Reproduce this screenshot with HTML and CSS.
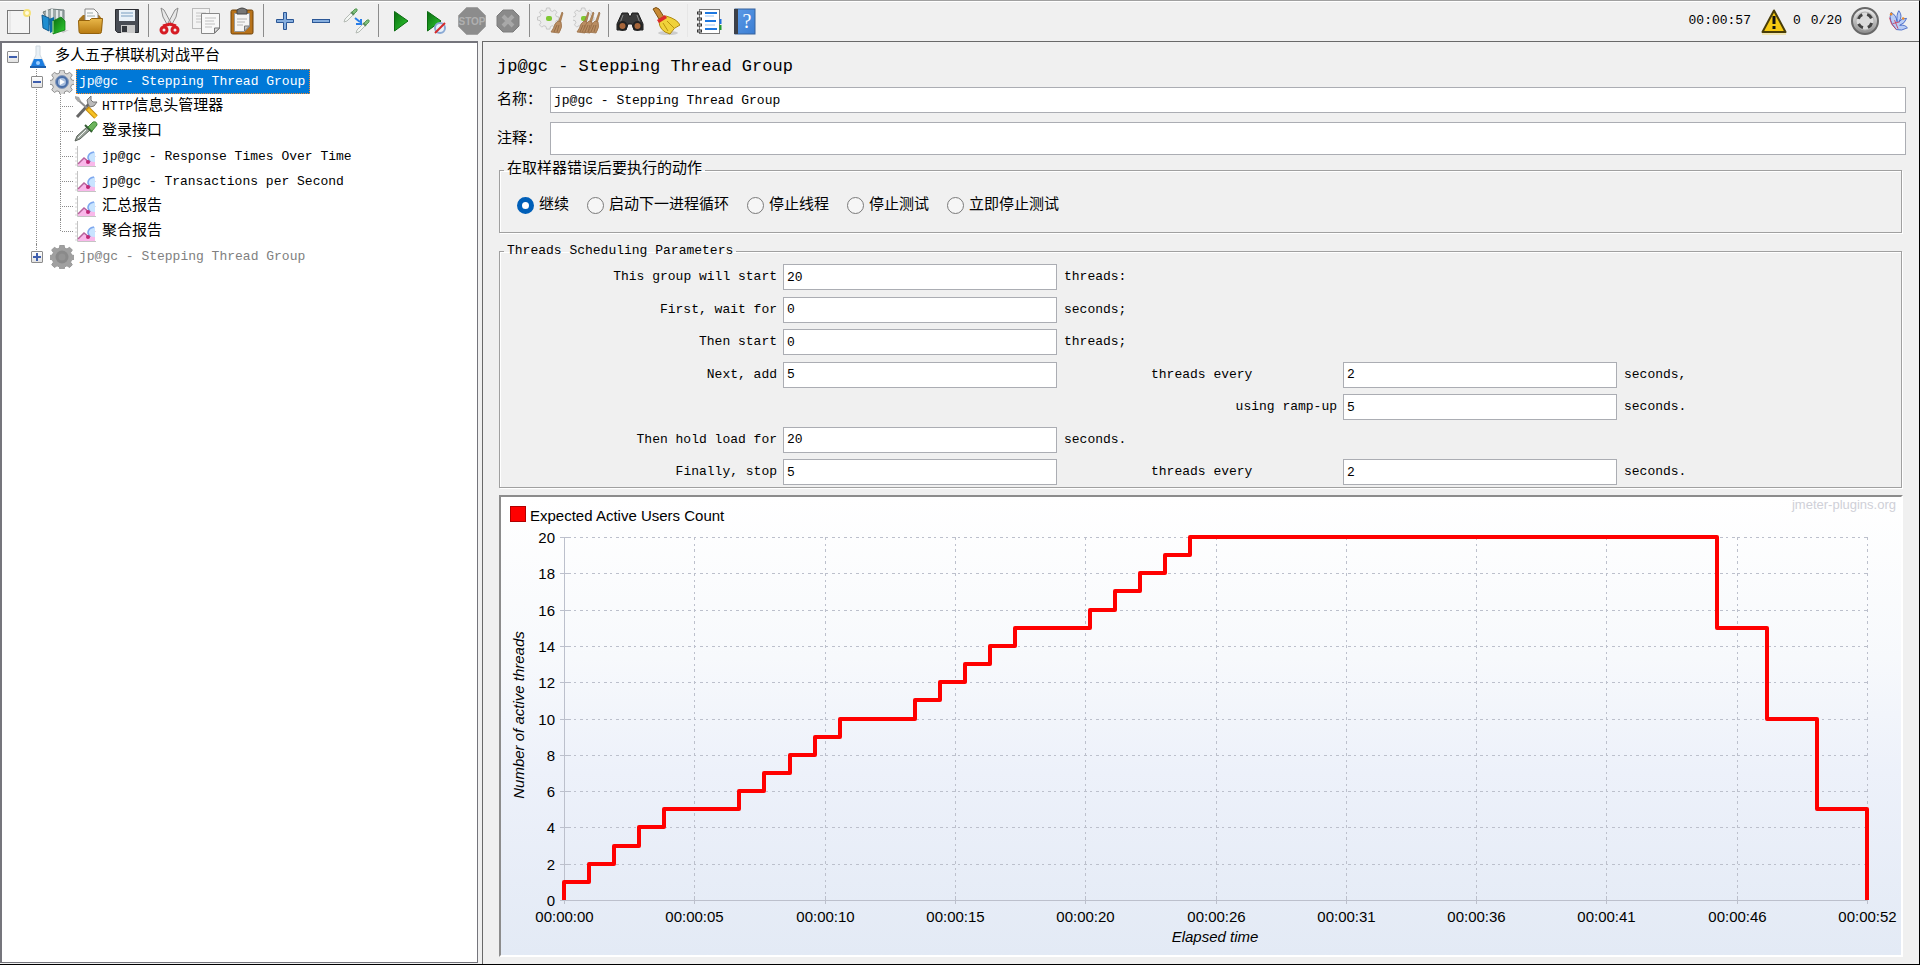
FILE: index.html
```html
<!DOCTYPE html>
<html lang="zh-CN">
<head>
    <meta charset="UTF-8">
    <meta name="viewport" content="width=device-width, initial-scale=1.0">
    <title>多人五子棋联机对战平台</title>
    <link rel="stylesheet" href="styles.css">
</head>
<body>
    <!-- shared icon symbols and gradients -->
    <svg class="defs" width="0" height="0" aria-hidden="true">
        <defs>
            <linearGradient id="green" x1="0" y1="0" x2="1" y2="1">
                <stop offset="0" stop-color="#0b6b12"/>
                <stop offset="1" stop-color="#2fd02f"/>
            </linearGradient>
            <linearGradient id="gold" x1="0" y1="0" x2="0" y2="1">
                <stop offset="0" stop-color="#e9b84a"/>
                <stop offset="1" stop-color="#b87a10"/>
            </linearGradient>
            <linearGradient id="steel" x1="0" y1="0" x2="0" y2="1">
                <stop offset="0" stop-color="#f2f2f2"/>
                <stop offset="1" stop-color="#8a8a8a"/>
            </linearGradient>
            <linearGradient id="blue" x1="0" y1="0" x2="1" y2="1">
                <stop offset="0" stop-color="#5c9be8"/>
                <stop offset="1" stop-color="#3b7dd2"/>
            </linearGradient>
            <g id="pipette">
                <path d="M0 13 L1 10 L7 4 L9 6 L3 12 Z" fill="#f4f7f4" stroke="#b4bab4" stroke-width="1"/>
                <path d="M7 3 L10 6" stroke="#5a8a5a" stroke-width="1.500"/>
                <path d="M8 3 L11 0 Q14 -1 13 2 L10 5 Z" fill="#7fbd7a" stroke="#5a9a58" stroke-width="1"/>
            </g>
            <g id="broom">
                <path d="M11 0 L12 1 L9 12 L7 11 Z" fill="#b98a58" stroke="#8d6238" stroke-width=".6"/>
                <path d="M7 9 L10 10 Q12 15 8 21 L0 20 Q3 16 4 12 Z" fill="#b98d62" stroke="#9a7048" stroke-width=".8"/>
                <path d="M3 20 L6 13 M6 20 L8 13" stroke="#8d6540" stroke-width=".8"/>
            </g>
            <g id="cog">
                <path d="M10 0h4l.6 3 2.4 1 2.6-1.7 2.7 2.7-1.7 2.6 1 2.4 3 .6v3.6l-3 .6-1 2.4 1.7 2.6-2.7 2.7-2.6-1.7-2.4 1-.6 3h-4l-.6-3-2.4-1-2.6 1.7-2.7-2.7 1.7-2.6-1-2.4-3-.6v-3.6l3-.6 1-2.4-1.7-2.6 2.7-2.7 2.6 1.7 2.4-1z"/>
            </g>
            <symbol id="chart-icon" viewBox="0 0 24 24">
                <path d="M3.500 1V21.500H22" fill="none" stroke="#c4c4c4"/>
                <path d="M1 4h2M1 8h2M1 12h2M1 16h2M1 20h2" stroke="#d4d4d4"/>
                <path d="M4 20 L10 13 L15 17 L21 9 V21 H4 Z" fill="#f9b8ea"/>
                <path d="M4 19 L10 13 L15 17 L21 11" fill="none" stroke="#b8609c" stroke-width="1.500"/>
                <path d="M21 7 Q15 7 13 12 Q15 17 21 17 Z" fill="#c8e4ff"/>
                <path d="M20 7 Q14 8 14 13 L16 17" fill="none" stroke="#7fa8ee" stroke-width="1.500"/>
                <circle cx="14" cy="17" r="2" fill="#c02878"/>
            </symbol>
        </defs>
    </svg>

    <header class="toolbar">
        <div class="tools">
            <button type="button" title="新建">
                <svg viewBox="0 0 28 28"><rect x="2.500" y="3.500" width="22" height="23" fill="#f4f4f4" stroke="#777"/><path d="M5 4V26" stroke="#dcdcdc"/><circle cx="22" cy="6" r="3" fill="#fffbe0" stroke="#f5e27a" stroke-width="2"/></svg>
            </button>
            <button type="button" title="模板">
                <svg viewBox="0 0 28 28"><path d="M20 24l8-1-6 3z" fill="#c4c4c4"/><path d="M2 5l8-3 13 1v12l-14 3z" fill="#9fabab" stroke="#6f7c7c"/><path d="M6 3v10M11 2v10M16 3v10M20 4v9" stroke="#e2e8e8" stroke-width="2"/><path d="M1 8l7 3v13l-6-3z" fill="#1f8ed0" stroke="#11598c"/><path d="M8 12l5-2v14l-4 2z" fill="#0e6da8"/><path d="M12 14l8-4 4 4v9l-12 4z" fill="url(#green)" stroke="#0c7d12" stroke-width=".8"/><path d="M12 14v12" stroke="#bff0b0"/></svg>
            </button>
            <button type="button" title="打开">
                <svg viewBox="0 0 28 28"><path d="M2 12l4-4h16l3 4v12H3z" fill="#a8741c"/><path d="M8 2h9l4 4v12H8z" fill="#fafafa" stroke="#888"/><path d="M10 6h6M10 9h8" stroke="#9aa"/><path d="M1.500 13.500h11l2-2h11l-1 13q0 2-2 2H4q-2 0-2-2z" fill="url(#gold)" stroke="#93610d"/></svg>
            </button>
            <button type="button" title="保存">
                <svg viewBox="0 0 28 28"><path d="M2.500 2.500h23v23h-21l-2-2z" fill="#484c54" stroke="#2a2c31"/><rect x="6" y="3" width="16" height="11" fill="#eaf1f8"/><path d="M8 6h12M8 9h12" stroke="#9fb9d2" stroke-width="1.500"/><rect x="8" y="18" width="14" height="8" fill="#c9c9c9"/><rect x="9" y="19" width="5" height="6" fill="#33363c"/></svg>
            </button>
        </div>
        <div class="tools">
            <button type="button" title="剪切">
                <svg viewBox="0 0 28 28"><path d="M5 1l3 2 7 13-3 3-5-9zM22 1l-3 2-7 13 3 3 5-9z" fill="#e8e8e8" stroke="#8c8c8c"/><circle cx="8" cy="23" r="3" fill="none" stroke="#d61c24" stroke-width="3"/><circle cx="19" cy="23" r="3" fill="none" stroke="#d61c24" stroke-width="3"/><path d="M7 19l7-2 6 2" stroke="#d61c24" stroke-width="3" fill="none"/></svg>
            </button>
            <button type="button" title="复制">
                <svg viewBox="0 0 28 28"><rect x=".5" y="1.500" width="17" height="20" fill="#f3f3f3" stroke="#bbb"/><path d="M4 6h10M4 9h5M4 12h5M4 15h5" stroke="#c4c4c4"/><path d="M9.500 6.500h18v15l-5 5h-13z" fill="#f8f8f8" stroke="#888"/><path d="M22.500 26v-5h5z" fill="#ddd" stroke="#777"/><path d="M13 11h11M13 14h9M13 17h10M13 20h7" stroke="#c0c0c0"/></svg>
            </button>
            <button type="button" title="粘贴">
                <svg viewBox="0 0 28 28"><rect x="3" y="3" width="22" height="24" rx="1.500" fill="#b8731b" stroke="#6f430b"/><path d="M6.500 6.500h15v13l-5 5h-10z" fill="#f5f5f5" stroke="#999"/><path d="M16.500 24v-5h5z" fill="#c9c9c9" stroke="#777"/><path d="M9 12h10M9 15h8M9 18h6" stroke="#b4b4b4"/><path d="M9 3q5-4 10 0v4H9z" fill="#777" stroke="#444"/></svg>
            </button>
        </div>
        <div class="tools">
            <button type="button" title="全部展开">
                <svg viewBox="0 0 28 28"><path d="M12.500 5.500h3v7h7v3h-7v7h-3v-7h-7v-3h7z" fill="#86aede" stroke="#2b5796"/></svg>
            </button>
            <button type="button" title="全部折叠">
                <svg viewBox="0 0 28 28"><rect x="5.500" y="12.500" width="17" height="3" fill="#86aede" stroke="#2b5796"/></svg>
            </button>
            <button type="button" title="切换">
                <svg viewBox="0 0 28 28"><use href="#pipette" x="1" y="2"/><use href="#pipette" x="13" y="13"/><path d="M12 11l5 4M13 17h5v-5" fill="none" stroke="#2a7ee8" stroke-width="2"/></svg>
            </button>
        </div>
        <div class="tools">
            <button type="button" title="启动">
                <svg viewBox="0 0 28 28"><path d="M8.500 4.500L22 14 8.500 24z" fill="url(#green)" stroke="#0a6b10"/></svg>
            </button>
            <button type="button" title="不停顿开始">
                <svg viewBox="0 0 28 28"><path d="M5.500 4.500L19 14 5.500 24z" fill="url(#green)" stroke="#0a6b10"/><circle cx="18" cy="21" r="5" fill="#e6f0fa" stroke="#8aa9d4" stroke-width="2"/><path d="M13 26L23 16" stroke="#d42a2a" stroke-width="2"/></svg>
            </button>
            <button type="button" title="停止" disabled>
                <svg viewBox="0 0 28 28"><path d="M8.500 0.500h11l8 8v11l-8 8h-11l-8-8v-11z" fill="#8c8c8c" stroke="#a4a4a4"/><text x="14" y="18" class="stop-text">STOP</text></svg>
            </button>
            <button type="button" title="关闭" disabled>
                <svg viewBox="0 0 28 28"><path d="M9 3h10l6 6v10l-6 6H9l-6-6V9z" fill="#8a8a8a" stroke="#7c7c7c"/><path d="M9 9l10 10M19 9L9 19" stroke="#a8a8a8" stroke-width="4"/></svg>
            </button>
        </div>
        <div class="tools">
            <button type="button" title="清除">
                <svg viewBox="0 0 28 28"><g transform="translate(1 1) scale(.85)" fill="#ececec" stroke="#c0c0c0"><use href="#cog"/></g><rect x="9" y="9" width="6" height="5" rx="2" fill="#7fc832"/><use href="#broom" x="14" y="5"/></svg>
            </button>
            <button type="button" title="清除全部">
                <svg viewBox="0 0 28 28"><g transform="translate(0 1) scale(.85)" fill="#ececec" stroke="#c0c0c0"><use href="#cog"/></g><rect x="8" y="9" width="6" height="5" rx="2" fill="#7fc832"/><use href="#broom" x="4" y="5"/><use href="#broom" x="9" y="5"/><use href="#broom" x="15" y="5"/></svg>
            </button>
        </div>
        <div class="tools">
            <button type="button" title="查找">
                <svg viewBox="0 0 28 28"><path d="M6 6h6l1 3h2l1-3h6l5 11v6h-9l-2-6h-4l-2 6H1v-6z" fill="#3b3b3b" stroke="#1c1c1c"/><path d="M7 8l-3 8M21 8l3 8" stroke="#8d8d8d"/><circle cx="6.500" cy="19" r="4" fill="#a8663a" stroke="#222" stroke-width="2"/><circle cx="21.500" cy="19" r="4" fill="#a8663a" stroke="#222" stroke-width="2"/></svg>
            </button>
            <button type="button" title="重置查找">
                <svg viewBox="0 0 28 28"><ellipse cx="16" cy="26" rx="10" ry="2" fill="#ccc"/><path d="M1 2q3-3 6 0l5 8-5 2z" fill="#c88a34" stroke="#7b4f12"/><path d="M7 14l7-5q11 3 14 9-6 2-10 9Q7 24 7 14z" fill="#f0d23a" stroke="#b08a10"/><path d="M11 16l5 8M15 14l7 7" stroke="#b9930f"/><path d="M5 13l8-5 2 3-8 5z" fill="#dc2a2a"/></svg>
            </button>
        </div>
        <div class="tools last">
            <button type="button" title="函数助手对话框">
                <svg viewBox="0 0 28 28"><rect x="4.500" y="2.500" width="20" height="24" fill="#fff" stroke="#777"/><path d="M10 6h12M10 14h11M10 22h12" stroke="#1d78e0" stroke-width="2"/><path d="M10 9h9M10 18h10" stroke="#9cc4f2"/><path d="M2 6h5M2 12h5M2 18h5M2 24h5" stroke="#333" stroke-width="3"/><path d="M3 6h3M3 12h3M3 18h3M3 24h3" stroke="#ddd"/><path d="M25.500 12v5" stroke="#1d6fe0" stroke-width="2"/><path d="M25.500 18v5" stroke="#1f9a2c" stroke-width="2"/></svg>
            </button>
            <button type="button" title="帮助">
                <svg viewBox="0 0 28 28"><rect x="4" y="2" width="20" height="25" fill="url(#blue)" stroke="#37629c"/><rect x="3" y="2" width="4" height="25" fill="#3c4048"/><text x="16" y="21" class="help-text">?</text></svg>
            </button>
        </div>
        <div class="status">
            <span class="clock">00:00:57</span>
            <svg class="icon" viewBox="0 0 28 28"><path d="M2 26h24v2H2z" fill="#f0e4b0"/><path d="M14 3.500L25.500 25h-23z" fill="#f5c912" stroke="#4a3e08" stroke-width="2" stroke-linejoin="round"/><path d="M14 9v8M14 19v3" stroke="#111" stroke-width="3"/></svg>
            <span>0</span>
            <span class="count">0/20</span>
            <svg class="icon" viewBox="0 0 28 28"><circle cx="14" cy="14" r="13" fill="url(#steel)" stroke="#686868" stroke-width="2"/><circle cx="14" cy="14" r="9" fill="#dcdcdc" stroke="#b4b4b4"/><circle cx="14" cy="14" r="7" fill="none" stroke="#444" stroke-width="3" stroke-dasharray="6 5" stroke-dashoffset="-2"/></svg>
            <svg class="icon feather" viewBox="0 0 28 28"><path d="M12 24Q2 13 6 4q6 3 7 11-1-9 2-13 5 6 0 13 4-5 9-4-2 6-8 8 6-1 9 3-7 4-13 2z" fill="#b9cdf6" stroke="#3e62c4"/><path d="M4 10q1 8 8 14M8 17l8-2M10 13l4 10" fill="none" stroke="#cc3c5c"/><circle cx="20" cy="11" r="1.500" fill="#e88b2e"/><circle cx="6" cy="6" r="1.500" fill="#e88b2e"/></svg>
        </div>
    </header>

    <div class="workspace">
        <nav class="tree-panel">
            <ul class="tree">
                <li>
                    <div class="row">
                        <button type="button" class="toggle minus" aria-label="折叠"></button>
                        <svg class="node" viewBox="0 0 24 24"><path d="M10 1h4v9l5 10q0 2-2 2H7q-2 0-2-2l5-10z" fill="#eaf1f6" stroke="#cfd8df"/><path d="M8 14h8l3 7H5z" fill="#1c7de0"/><path d="M4 22h16" stroke="#1b5fae" stroke-width="2"/><circle cx="12" cy="18" r="2" fill="#9fd0ff"/></svg>
                        <span class="label">多人五子棋联机对战平台</span>
                    </div>
                    <ul>
                        <li>
                            <div class="row">
                                <button type="button" class="toggle minus" aria-label="折叠"></button>
                                <svg class="node" viewBox="0 0 24 24"><use href="#cog" fill="#d6d6d6" stroke="#8f8f8f"/><circle cx="12" cy="12" r="6.500" fill="#4a6fa8" stroke="#8a9cba"/><circle cx="12" cy="12" r="4" fill="#a9bfde"/><path d="M10 9l5 3-5 3z" fill="#fff"/></svg>
                                <span class="label latin selected">jp@gc - Stepping Thread Group</span>
                            </div>
                            <ul>
                                <li>
                                    <div class="row leaf">
                                        <svg class="node" viewBox="0 0 24 24"><path d="M3 22L15 9" stroke="#666" stroke-width="3"/><path d="M14 9l-1-4 4-4v4l2 2h4l-3 4-4 1z" fill="#bbb" stroke="#777"/><path d="M2 3l11 10" stroke="#8d8d8d" stroke-width="2"/><path d="M1 1l4 1 2 4-3 1-3-4z" fill="#aaa"/><path d="M13 13l9 9" stroke="#c58a0c" stroke-width="5"/><path d="M14 14l8 8" stroke="#f6c224" stroke-width="3"/></svg>
                                        <span class="label"><span class="latin">HTTP</span>信息头管理器</span>
                                    </div>
                                </li>
                                <li>
                                    <div class="row leaf">
                                        <svg class="node" viewBox="0 0 24 24"><path d="M1 21l2-5L13 7l3 3L6 19z" fill="#9aa39a" stroke="#5a625a"/><path d="M4 18l8-8" stroke="#f2f5f2"/><path d="M11 5l7 7" stroke="#355c35" stroke-width="2"/><path d="M14 7l5-5q4-1 4 3l-5 6z" fill="#6cb45c" stroke="#3d8434"/></svg>
                                        <span class="label">登录接口</span>
                                    </div>
                                </li>
                                <li>
                                    <div class="row leaf">
                                        <svg class="node"><use href="#chart-icon"/></svg>
                                        <span class="label latin">jp@gc - Response Times Over Time</span>
                                    </div>
                                </li>
                                <li>
                                    <div class="row leaf">
                                        <svg class="node"><use href="#chart-icon"/></svg>
                                        <span class="label latin">jp@gc - Transactions per Second</span>
                                    </div>
                                </li>
                                <li>
                                    <div class="row leaf">
                                        <svg class="node"><use href="#chart-icon"/></svg>
                                        <span class="label">汇总报告</span>
                                    </div>
                                </li>
                                <li>
                                    <div class="row leaf">
                                        <svg class="node"><use href="#chart-icon"/></svg>
                                        <span class="label">聚合报告</span>
                                    </div>
                                </li>
                            </ul>
                        </li>
                        <li>
                            <div class="row">
                                <button type="button" class="toggle plus" aria-label="展开"></button>
                                <svg class="node" viewBox="0 0 24 24"><use href="#cog" fill="#a0a0a0" stroke="#989898"/><circle cx="12" cy="12" r="6.500" fill="#8a8a8a"/><circle cx="12" cy="12" r="3.500" fill="#949494"/></svg>
                                <span class="label latin off">jp@gc - Stepping Thread Group</span>
                            </div>
                        </li>
                    </ul>
                </li>
            </ul>
        </nav>

        <main class="editor">
            <h1>jp@gc - Stepping Thread Group</h1>
            <div class="field">
                <label for="name">名称：</label>
                <input type="text" id="name" value="jp@gc - Stepping Thread Group">
            </div>
            <div class="field comment">
                <label for="comment">注释：</label>
                <input type="text" id="comment">
            </div>

            <fieldset>
                <legend>在取样器错误后要执行的动作</legend>
                <div class="radios">
                    <label><input type="radio" name="on-error" checked>继续</label>
                    <label><input type="radio" name="on-error">启动下一进程循环</label>
                    <label><input type="radio" name="on-error">停止线程</label>
                    <label><input type="radio" name="on-error">停止测试</label>
                    <label><input type="radio" name="on-error">立即停止测试</label>
                </div>
            </fieldset>

            <fieldset class="scheduling">
                <legend class="latin">Threads Scheduling Parameters</legend>
                <div class="params">
                    <label for="total">This group will start</label>
                    <input type="text" id="total" value="20">
                    <span class="unit">threads:</span>

                    <label for="delay">First, wait for</label>
                    <input type="text" id="delay" value="0">
                    <span class="unit">seconds;</span>

                    <label for="burst">Then start</label>
                    <input type="text" id="burst" value="0">
                    <span class="unit">threads;</span>

                    <label for="add">Next, add</label>
                    <input type="text" id="add" value="5">
                    <label for="add-every" class="every">threads every</label>
                    <input type="text" id="add-every" value="2">
                    <span class="unit">seconds,</span>

                    <label for="ramp" class="ramp">using ramp-up</label>
                    <input type="text" id="ramp" value="5">
                    <span class="unit">seconds.</span>

                    <label for="hold">Then hold load for</label>
                    <input type="text" id="hold" value="20">
                    <span class="unit">seconds.</span>

                    <label for="stop">Finally, stop</label>
                    <input type="text" id="stop" value="5">
                    <label for="stop-every" class="every">threads every</label>
                    <input type="text" id="stop-every" value="2">
                    <span class="unit">seconds.</span>
                </div>
            </fieldset>

            <div class="chart">
                <svg id="chart" viewBox="0 0 1400 458" role="img" aria-label="Expected Active Users Count">
                    <rect class="legend-box" x="9.500" y="9.500" width="15" height="15"/>
                    <text x="29" y="24">Expected Active Users Count</text>
                    <text class="brand" x="1395" y="12">jmeter-plugins.org</text>
                    <g id="grid"></g>
                    <text class="axis-title" x="714" y="445">Elapsed time</text>
                    <text class="axis-title" transform="translate(23 218) rotate(-90)">Number of active threads</text>
                    <polyline id="line"/>
                </svg>
            </div>
        </main>
    </div>
    <script src="script.js"></script>
</body>
</html>
```
FILE: styles.css
```css
* {
    box-sizing: border-box;
}

body {
    margin: 0;
    min-height: 100vh;
    display: flex;
    flex-direction: column;
    background: #f0f0f0;
    border-top: 1px solid #a0a0a0;
    border-right: 1px solid #000;
    border-bottom: 1px solid #000;
    color: #000;
    font-family: "Liberation Mono", "Noto Sans CJK SC", monospace;
    font-size: 15px;
    line-height: 20px;
}

.defs {
    position: absolute;
}

.latin {
    font-size: 13px;
}

/* toolbar */
.toolbar {
    display: flex;
    align-items: center;
    height: 40px;
    padding: 0 0 2px 1px;
    border-top: 1px solid #fff;
}

.tools {
    display: flex;
    height: 33px;
    padding-right: 3px;
    margin-right: 3px;
    border-right: 1px solid #8c8c8c;
}

.tools:nth-of-type(6) {
    border-right-color: #e6e6e6;
}

.tools.last {
    border-right: none;
}

.tools button {
    display: flex;
    align-items: center;
    justify-content: center;
    width: 36px;
    padding: 0;
    border: none;
    background: none;
}

.tools svg, .status .icon {
    width: 28px;
    height: 28px;
}

.status .feather {
    width: 24px;
    height: 24px;
    margin-left: 2px;
}

.stop-text {
    font: bold 10px "Liberation Sans", sans-serif;
    fill: #b0b0b0;
    text-anchor: middle;
}

.help-text {
    font: 20px "Liberation Serif", serif;
    fill: #fff;
    text-anchor: middle;
}

.status {
    display: flex;
    align-items: center;
    gap: 5px;
    margin-left: auto;
    padding-right: 9px;
    font-size: 13px;
}

.clock {
    margin-right: 4px;
}

.count {
    margin: 0 4px 0 5px;
}

/* layout */
.workspace {
    flex: 1;
    display: flex;
    gap: 4px;
}

.tree-panel {
    width: 478px;
    flex: none;
    margin-bottom: 1px;
    padding-top: 1px;
    background: #fff;
    border: 2px solid #75757c;
    border-right-width: 1px;
    border-bottom-width: 1px;
}

.editor {
    flex: 1;
    min-width: 0;
    padding: 13px 13px 6px 14px;
    border-left: 1px solid #696969;
    border-top: 1px solid #696969;
}

/* tree */
.tree, .tree ul {
    list-style: none;
    margin: 0;
    padding: 0;
}

.tree {
    padding-left: 5px;
}

.tree ul {
    padding-left: 24px;
}

.tree li {
    position: relative;
}

.tree ul > li::before {
    content: "";
    position: absolute;
    left: 5px;
    top: 0;
    bottom: 0;
    border-left: 1px dotted #8c8c8c;
}

.tree ul > li:last-child::before {
    bottom: auto;
    height: 12px;
}

.row {
    display: flex;
    align-items: center;
    height: 25px;
}

.row.leaf::before {
    content: "";
    width: 11px;
    margin: 0 1px 0 7px;
    border-top: 1px dotted #8c8c8c;
}

.toggle {
    position: relative;
    width: 12px;
    height: 12px;
    flex: none;
    margin-right: 7px;
    padding: 0;
    border: 1px solid #8c8c8c;
    border-radius: 1px;
    background: linear-gradient(#fff, #e2e2e2);
}

.toggle::before {
    content: "";
    position: absolute;
    left: 1px;
    top: 4px;
    width: 8px;
    height: 2px;
    background: #3f5fae;
}

.toggle.plus::after {
    content: "";
    position: absolute;
    left: 4px;
    top: 1px;
    width: 2px;
    height: 8px;
    background: #3f5fae;
}

.node {
    width: 24px;
    height: 24px;
    flex: none;
    margin-right: 2px;
}

.leaf .node {
    margin-right: 1px;
}

.label {
    height: 25px;
    padding: 0 3px;
    line-height: 26px;
    white-space: nowrap;
}

.selected {
    padding: 0 4px 0 2px;
    border: 1px dotted #ff8c26;
    background: #0078d7;
    color: #fff;
    line-height: 23px;
}

.off {
    color: #808080;
}

/* editor */
h1 {
    margin: 0 0 8px;
    font-size: 17px;
    font-weight: normal;
    line-height: 24px;
}

input[type="text"] {
    width: 100%;
    min-width: 0;
    height: 26px;
    padding: 0 3px;
    border: 1px solid #abadb3;
    background: #fff;
    font-family: inherit;
    font-size: 13px;
}

.field {
    display: flex;
    align-items: center;
    margin-bottom: 9px;
}

.field label {
    flex: none;
    width: 53px;
    padding-top: 2px;
}

.field.comment {
    margin-bottom: 5px;
}

.field.comment input {
    height: 33px;
}

fieldset {
    min-width: 0;
    margin: 0 4px 8px 2px;
    padding: 0 0 0 4px;
    border: 1px solid #a0a0a0;
    box-shadow: 1px 1px 0 #fff, inset 1px 1px 0 #fff;
}

legend {
    padding: 0 3px;
}

.radios {
    display: flex;
    gap: 18px;
    padding: 16px 0 16px 13px;
}

.radios label {
    display: flex;
    align-items: center;
    gap: 5px;
}

input[type="radio"] {
    appearance: none;
    width: 17px;
    height: 17px;
    margin: 0 0 2px;
    border: 1px solid #7a7a7a;
    border-radius: 50%;
    background: #f6f6f6;
}

input[type="radio"]:checked {
    border: 5px solid #005fb8;
    background: #fff;
}

fieldset.scheduling {
    margin-bottom: 7px;
    padding: 3px 0 2px;
}

.scheduling legend {
    margin-left: 4px;
}

.params {
    display: grid;
    grid-template-columns: 277fr 274fr 82fr 186fr 274fr 278fr;
    column-gap: 6px;
    align-content: space-between;
    align-items: center;
    min-height: 221px;
    font-size: 13px;
}

.params label {
    grid-column: 1;
    text-align: right;
}

.params label.every {
    grid-column: 4;
    text-align: left;
}

.params label.ramp {
    grid-column: 4;
}

.unit {
    padding-left: 1px;
}

/* chart */
.chart {
    margin: 0 3px 0 2px;
    border: 2px solid #fff;
    border-top-color: #8c8c8c;
    border-left-color: #8c8c8c;
    background: linear-gradient(#fff, #f7f9fc 35%, #edf1fa 60%, #e3eaf5);
}

.chart svg {
    display: block;
    width: 100%;
}

.chart text {
    font-family: "Liberation Sans", sans-serif;
    font-size: 15px;
}

.chart .brand {
    font-size: 13px;
    fill: #cfd0d8;
    text-anchor: end;
}

.chart .axis-title {
    font-style: italic;
    text-anchor: middle;
}

.chart .x-label {
    text-anchor: middle;
}

.chart .y-label {
    text-anchor: end;
}

.legend-box {
    fill: #f00;
    stroke: #b00000;
}

.axis {
    stroke: #bcc0cc;
}

.gridline {
    stroke: #bcc0cc;
    stroke-dasharray: 3 3 2 4;
}

#line {
    fill: none;
    stroke: #f00;
    stroke-width: 4;
    stroke-linejoin: round;
}
```
FILE: script.js
```js
const SVG_NS = 'http://www.w3.org/2000/svg';
const plot = { left: 63, right: 1366, top: 40, bottom: 403 };
const maxTime = 52;
const maxUsers = 20;

// [second, users] each time the number of active threads changes
const steps = [
    [0, 1], [1, 2], [2, 3], [3, 4], [4, 5],
    [7, 6], [8, 7], [9, 8], [10, 9], [11, 10],
    [14, 11], [15, 12], [16, 13], [17, 14], [18, 15],
    [21, 16], [22, 17], [23, 18], [24, 19], [25, 20],
    [46, 15], [48, 10], [50, 5], [52, 0]
];

const timeLabels = ['00', '05', '10', '15', '20', '26', '31', '36', '41', '46', '52'];

const grid = document.getElementById('grid');

function getX(time) {
    return Math.round(plot.left + (plot.right - plot.left) * time / maxTime);
}

function getY(users) {
    return Math.round(plot.bottom - (plot.bottom - plot.top) * users / maxUsers);
}

function addLine(x1, y1, x2, y2, cls) {
    const line = document.createElementNS(SVG_NS, 'line');
    line.setAttribute('x1', x1);
    line.setAttribute('y1', y1);
    line.setAttribute('x2', x2);
    line.setAttribute('y2', y2);
    line.setAttribute('class', cls);
    grid.appendChild(line);
}

function addText(x, y, text, cls) {
    const el = document.createElementNS(SVG_NS, 'text');
    el.setAttribute('x', x);
    el.setAttribute('y', y);
    el.setAttribute('class', cls);
    el.textContent = text;
    grid.appendChild(el);
}

function drawGrid() {
    for (let users = 0; users <= maxUsers; users += 2) {
        const y = getY(users) + 0.5;
        addLine(plot.left - 4, y, plot.left + 4, y, 'axis');
        addLine(plot.left + 4, y, plot.right, y, users === 0 ? 'axis' : 'gridline');
        addText(plot.left - 9, getY(users) + 6, users, 'y-label');
    }

    timeLabels.forEach((label, i) => {
        const x = getX(maxTime * i / 10) + 0.5;
        addLine(x, plot.bottom - 4, x, plot.bottom + 4, 'axis');
        addLine(x, plot.bottom, x, plot.top, i === 0 ? 'axis' : 'gridline');
        addText(x, plot.bottom + 22, '00:00:' + label, 'x-label');
    });
}

function drawLine() {
    const points = [];
    let last = 0;
    steps.forEach(([time, users]) => {
        points.push(getX(time) + ',' + getY(last));
        points.push(getX(time) + ',' + getY(users));
        last = users;
    });
    document.getElementById('line').setAttribute('points', points.join(' '));
}

drawGrid();
drawLine();
```
